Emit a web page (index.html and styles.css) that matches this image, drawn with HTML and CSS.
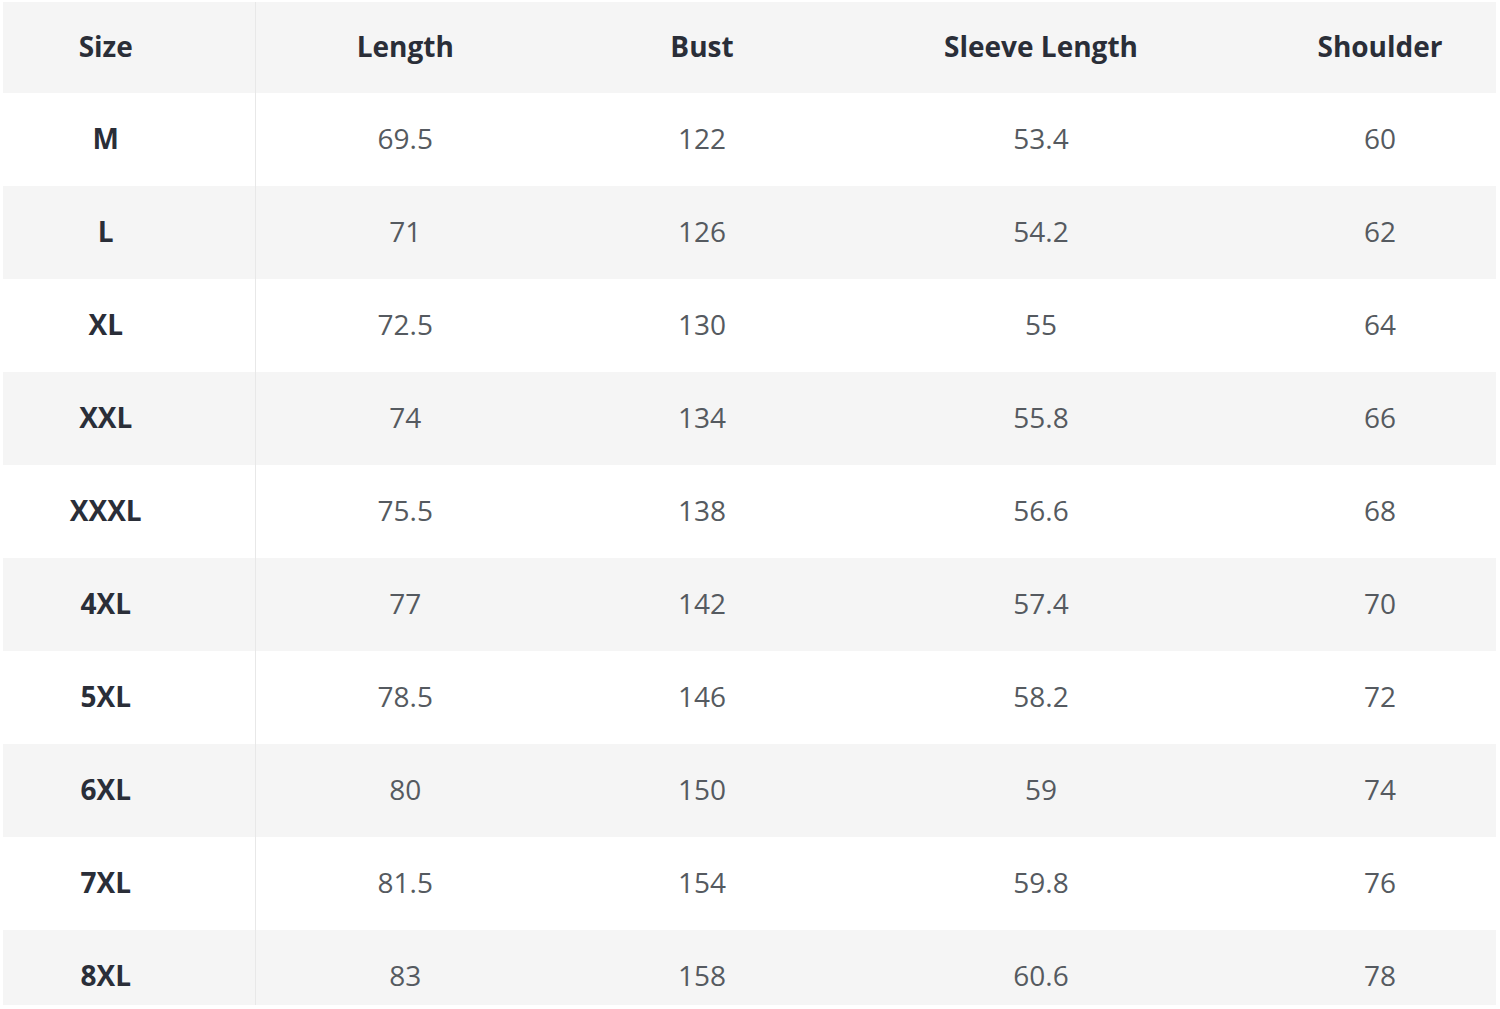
FILE: index.html
```html
<!DOCTYPE html>
<html>
<head>
<meta charset="utf-8">
<link rel="stylesheet" href="styles.css">
</head>
<body>
<div class="frame">
<table class="sizes">
<colgroup><col class="c1"><col class="c2"><col class="c3"><col class="c4"><col class="c5"></colgroup>
<thead>
<tr class="head"><th class="size">Size</th><th>Length</th><th>Bust</th><th>Sleeve Length</th><th class="last">Shoulder</th></tr>
</thead>
<tbody>
<tr><th class="size">M</th><td>69.5</td><td>122</td><td>53.4</td><td class="last">60</td></tr>
<tr><th class="size">L</th><td>71</td><td>126</td><td>54.2</td><td class="last">62</td></tr>
<tr><th class="size">XL</th><td>72.5</td><td>130</td><td>55</td><td class="last">64</td></tr>
<tr><th class="size">XXL</th><td>74</td><td>134</td><td>55.8</td><td class="last">66</td></tr>
<tr><th class="size">XXXL</th><td>75.5</td><td>138</td><td>56.6</td><td class="last">68</td></tr>
<tr><th class="size">4XL</th><td>77</td><td>142</td><td>57.4</td><td class="last">70</td></tr>
<tr><th class="size">5XL</th><td>78.5</td><td>146</td><td>58.2</td><td class="last">72</td></tr>
<tr><th class="size">6XL</th><td>80</td><td>150</td><td>59</td><td class="last">74</td></tr>
<tr><th class="size">7XL</th><td>81.5</td><td>154</td><td>59.8</td><td class="last">76</td></tr>
<tr><th class="size">8XL</th><td>83</td><td>158</td><td>60.6</td><td class="last">78</td></tr>
</tbody>
</table>
</div>
</body>
</html>
```
FILE: styles.css
```css
html, body {
  margin: 0;
  padding: 0;
  background: #ffffff;
}
.frame {
  padding: 2px 4px 0 3px;
  height: 1003px;
  overflow: hidden;
}
.sizes {
  width: 1493px;
  border-collapse: collapse;
  table-layout: fixed;
  font-family: "Open Sans", "Liberation Sans", sans-serif;
}
.c1 { width: 252px; }
.c2 { width: 300px; }
.c3 { width: 294px; }
.c4 { width: 384px; }
.c5 { width: 263px; }
.sizes th, .sizes td {
  box-sizing: border-box;
  text-align: center;
  padding: 0 0 4px 0;
  height: 93px;
  font-size: 28px;
  background: #ffffff;
}
.sizes td {
  color: #555a60;
  font-weight: 400;
}
.sizes th {
  color: #2a2e38;
  font-weight: 700;
}
.sizes .head th {
  height: 91px;
  padding-bottom: 3px;
  background: #f5f5f5;
}
.sizes .size {
  padding-right: 46px;
  border-right: 1px solid #e8e8e8;
}
.sizes .last {
  padding-left: 31px;
}
.sizes tbody tr:nth-child(even) th,
.sizes tbody tr:nth-child(even) td {
  background: #f5f5f5;
}
```
